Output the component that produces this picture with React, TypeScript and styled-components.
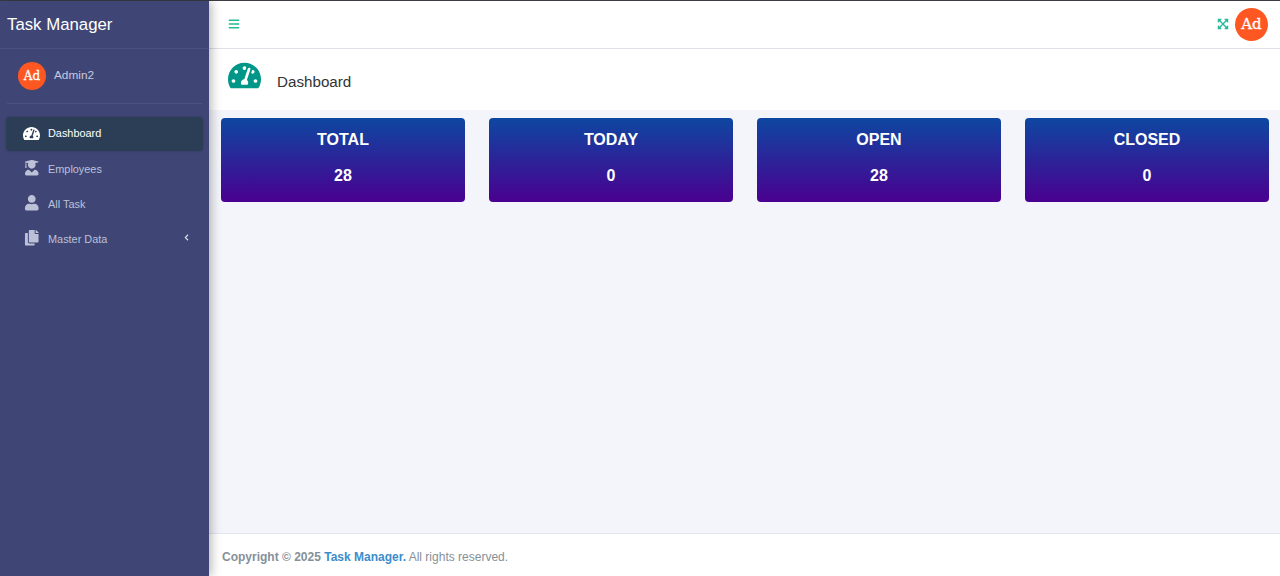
import styled, { createGlobalStyle } from 'styled-components';
import { FaBars, FaChevronLeft, FaCopy, FaExpandArrowsAlt, FaTachometerAlt, FaUser, FaUserGraduate } from 'react-icons/fa';

const menuItems = [
    { label: 'Dashboard', icon: FaTachometerAlt, active: true },
    { label: 'Employees', icon: FaUserGraduate },
    { label: 'All Task', icon: FaUser },
    { label: 'Master Data', icon: FaCopy, hasChildren: true },
];

const stats = [
    { title: 'TOTAL', value: 28 },
    { title: 'TODAY', value: 0 },
    { title: 'OPEN', value: 28 },
    { title: 'CLOSED', value: 0 },
];

function App() {
    return (
        <>
            <GlobalStyle />
            <Page>
                <TopLine />
                <Shell>
                    <Sidebar>
                        <Brand>Task Manager</Brand>
                        <UserPanel>
                            <Avatar $size={28}>Ad</Avatar>
                            <UserName>Admin2</UserName>
                        </UserPanel>
                        <Menu>
                            {menuItems.map(({ label, icon: Icon, active, hasChildren }) => (
                                <MenuItem key={label} $active={active}>
                                    <MenuIcon $active={active}><Icon /></MenuIcon>
                                    <MenuLabel>{label}</MenuLabel>
                                    {hasChildren && <MenuArrow><FaChevronLeft /></MenuArrow>}
                                </MenuItem>
                            ))}
                        </Menu>
                    </Sidebar>
                    <Main>
                        <Topbar>
                            <Toggle><FaBars /></Toggle>
                            <TopbarRight>
                                <ExpandIcon><FaExpandArrowsAlt /></ExpandIcon>
                                <Avatar $size={33}>Ad</Avatar>
                            </TopbarRight>
                        </Topbar>
                        <PageHeader>
                            <HeaderIcon><FaTachometerAlt /></HeaderIcon>
                            <PageTitle>Dashboard</PageTitle>
                        </PageHeader>
                        <Content>
                            {stats.map((stat) => (
                                <StatCard key={stat.title}>
                                    <StatTitle>{stat.title}</StatTitle>
                                    <StatValue>{stat.value}</StatValue>
                                </StatCard>
                            ))}
                        </Content>
                        <Footer>
                            <strong>Copyright © 2025 <FooterLink>Task Manager.</FooterLink></strong> All rights reserved.
                        </Footer>
                    </Main>
                </Shell>
            </Page>
        </>
    );
}

const GlobalStyle = createGlobalStyle`
    html, body {
        margin: 0;
        padding: 0;
        height: 100%;
    }
    body {
        font-family: "Liberation Sans", Arial, sans-serif;
        background: #f3f5fa;
    }
    #root {
        height: 100%;
    }
`

const Page = styled.div`
    height: 100vh;
    display: flex;
    flex-direction: column;
    overflow: hidden;
`

const TopLine = styled.div`
    height: 1px;
    flex: none;
    background: #3a3d45;
`

const Shell = styled.div`
    flex: 1;
    display: flex;
    min-height: 0;
`

const Sidebar = styled.aside`
    width: 209px;
    flex: none;
    background: #3f4675;
    box-shadow: 2px 0 10px rgba(0, 0, 0, 0.3);
    z-index: 1;
    display: flex;
    flex-direction: column;
`

const Brand = styled.div`
    height: 48px;
    box-sizing: border-box;
    padding: 0 7px;
    display: flex;
    align-items: center;
    font-size: 16.8px;
    color: #ffffff;
    border-bottom: 1px solid #4a5180;
`

const UserPanel = styled.div`
    margin: 0 7px;
    height: 54px;
    padding: 0 11px;
    display: flex;
    align-items: center;
    gap: 8px;
    border-bottom: 1px solid #4c5382;
`

const Avatar = styled.div<{ $size: number }>`
    width: ${({ $size }) => $size}px;
    height: ${({ $size }) => $size}px;
    border-radius: 50%;
    flex: none;
    background: #ff5722;
    color: #ffffff;
    display: flex;
    align-items: center;
    justify-content: center;
    font-family: "DejaVu Serif", serif;
    font-size: ${({ $size }) => Math.round($size * 0.44)}px;
    font-weight: normal;
    -webkit-text-stroke: 0.3px #ffffff;
`

const UserName = styled.span`
    font-size: 11.8px;
    color: #c6cae0;
    margin-bottom: 2px;
`

const Menu = styled.nav`
    display: flex;
    flex-direction: column;
    padding: 13px 6px 0;
    gap: 1px;
`

const MenuItem = styled.div<{ $active?: boolean }>`
    height: 34px;
    box-sizing: border-box;
    padding: 0 13px ${({ $active }) => ($active ? '2px' : '0')} 17px;
    display: flex;
    align-items: center;
    border-radius: 4px;
    background: ${({ $active }) => ($active ? '#2c3e56' : 'transparent')};
    color: ${({ $active }) => ($active ? '#ffffff' : '#bcc1d8')};
    box-shadow: ${({ $active }) => ($active ? '0 0 3px rgba(0, 0, 0, 0.2)' : 'none')};
`

const MenuIcon = styled.span<{ $active?: boolean }>`
    width: ${({ $active }) => ($active ? '25px' : '24px')};
    margin-left: ${({ $active }) => ($active ? '0' : '1px')};
    flex: none;
    display: flex;
    font-size: ${({ $active }) => ($active ? '17px' : '15.5px')};
    margin-bottom: ${({ $active }) => ($active ? '0' : '2px')};
`

const MenuLabel = styled.span`
    font-size: 10.9px;
    flex: 1;
`

const MenuArrow = styled.span`
    display: flex;
    font-size: 7px;
    color: #e4e6f0;
    margin-bottom: 3px;
`

const Main = styled.div`
    flex: 1;
    min-width: 0;
    display: flex;
    flex-direction: column;
`

const Topbar = styled.header`
    height: 48px;
    flex: none;
    box-sizing: border-box;
    padding: 0 12px 2px 19px;
    background: #ffffff;
    border-bottom: 1px solid #dfe2e8;
    display: flex;
    align-items: center;
    justify-content: space-between;
`

const Toggle = styled.span`
    display: flex;
    font-size: 12px;
    color: #26b99a;
`

const TopbarRight = styled.div`
    display: flex;
    align-items: center;
    gap: 6px;
    margin-top: 1px;
`

const ExpandIcon = styled.span`
    display: flex;
    font-size: 12px;
    color: #26b99a;
`

const PageHeader = styled.div`
    height: 61px;
    flex: none;
    box-sizing: border-box;
    padding: 0 19px;
    background: #ffffff;
    display: flex;
    align-items: center;
    gap: 16px;
    box-shadow: 0 2px 4px rgba(0, 0, 0, 0.05);
`

const HeaderIcon = styled.span`
    display: flex;
    font-size: 33px;
    color: #009688;
    margin-top: -8px;
`

const PageTitle = styled.h1`
    margin: 4px 0 0;
    font-size: 15.2px;
    font-weight: normal;
    color: #333333;
`

const Content = styled.main`
    flex: 1;
    box-sizing: border-box;
    padding: 8px 11px 0 12px;
    background: #f3f5fa;
    display: grid;
    grid-template-columns: repeat(4, 1fr);
    column-gap: 24px;
    align-content: start;
`

const StatCard = styled.div`
    height: 84px;
    box-sizing: border-box;
    padding-top: 13px;
    border-radius: 4px;
    background: linear-gradient(to bottom, #0d47a1, #4a0090);
    color: #ffffff;
    text-align: center;
    font-weight: bold;
`

const StatTitle = styled.div`
    font-size: 16px;
    line-height: 18px;
`

const StatValue = styled.div`
    margin-top: 18px;
    font-size: 16px;
    line-height: 18px;
`

const Footer = styled.footer`
    height: 43px;
    flex: none;
    box-sizing: border-box;
    padding: 15px 13px 0;
    background: #ffffff;
    border-top: 1px solid #e3e6ee;
    font-size: 12px;
    line-height: 16px;
    color: #869099;
`

const FooterLink = styled.span`
    color: #3c8dcb;
`

export default App;
